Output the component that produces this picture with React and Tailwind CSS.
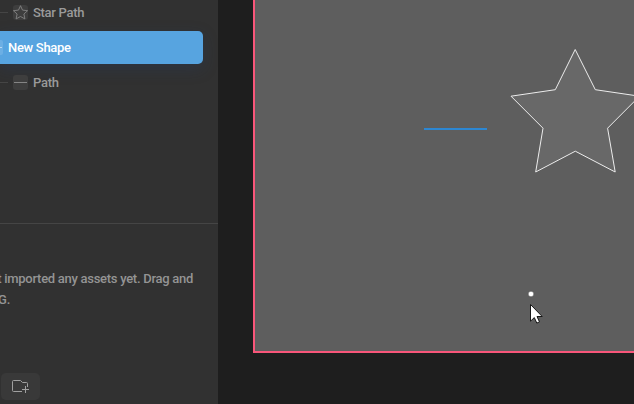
import React from "react";

function StarIcon() {
  return (
    <svg className="block h-[15px] w-[15px]" viewBox="0 0 15 15" fill="none" stroke="#858585" strokeWidth="0.9">
      <path d="M7.5 .7 9.5 5.1 14.6 5.7 10.9 9 11.9 13.9 7.5 11.5 3.1 13.9 4.1 9 .4 5.7 5.5 5.1Z" />
    </svg>
  );
}

function LayerRow({ label, children }) {
  return (
    <div className="flex h-[35px] items-center text-[#9a9a9a]">
      <span className="h-px w-2 bg-[#454545]" />
      <span className="ml-[5px] flex h-[15px] w-[15px] items-center justify-center rounded-[3px] bg-[#3e3e3e]">{children}</span>
      <span className="ml-[5px]">{label}</span>
    </div>
  );
}

function Sidebar() {
  return (
    <aside className="flex w-[218px] shrink-0 flex-col bg-[#313131]">
      <div className="flex h-[223px] shrink-0 flex-col">
        <div className="-mt-[5px] h-[35px]">
          <LayerRow label="Star Path"><StarIcon /></LayerRow>
        </div>
        <div className="mt-px flex h-[33px] w-[203px] items-center rounded-r-[5px] bg-[#57a4e0] text-white shadow-[0_5px_15px_rgba(35,65,110,0.25)]">
          <span className="flex h-[15px] w-[3px] items-center rounded-r-[2px] bg-[#6cafe4]">
            <span className="h-px w-[2px] bg-[#b5d8f3]" />
          </span>
          <span className="ml-[5px]">New Shape</span>
        </div>
        <div className="mt-px">
          <LayerRow label="Path"><span className="h-px w-[13px] bg-[#858585]" /></LayerRow>
        </div>
      </div>
      <div className="h-px shrink-0 bg-[#454545]" />
      <div className="mt-[44px] whitespace-nowrap leading-[21px] tracking-[-0.28px] text-[#949494]">
        <p className="flex w-[193px] justify-end">t imported any assets yet. Drag and</p>
        <p className="flex w-[10px] justify-end">G.</p>
      </div>
      <button className="ml-px mt-[63px] flex h-[27px] w-[39px] shrink-0 items-center rounded-[5px] bg-[#393939] pl-[10px]">
        <svg className="h-[15px] w-[18px]" viewBox="0 0 18 15" fill="none" stroke="#a0a0a0">
          <path d="M11 12.5H2.5Q1.5 12.5 1.5 11.5V2.5Q1.5 1.5 2.5 1.5H9.5L11.5 3.5H15.5Q16.5 3.5 16.5 4.5V8M14.5 7V14M11 10.5H18" />
        </svg>
      </button>
    </aside>
  );
}

function Canvas() {
  return (
    <main className="flex-1 overflow-hidden bg-[#1e1e1e] pl-[35px]">
      <div className="h-[353px] w-[400px] border-b-2 border-l-2 border-[#f9567a] bg-[#5e5e5e]">
        <svg className="block h-[351px] w-[379px]" viewBox="255 0 379 351">
          <path d="M424 129H487" stroke="#2d87d2" strokeWidth="2" />
          <path d="M575.2 49.5 595.3 89.7 639.5 96.2 607.6 128.2 615.2 172 575.3 151.2 535.7 172 543 128.2 511 96.2 555.3 89.7Z" fill="#686868" stroke="#ededed" />
          <circle cx="531" cy="294" r="2.8" fill="white" stroke="#444" strokeWidth="0.5" />
          <path d="M530.5 304.5V321.2L534.3 317.6 536.8 323.1 539.5 321.9 537 316.5H542.2Z" fill="white" stroke="#171717" strokeWidth="1" />
        </svg>
      </div>
    </main>
  );
}

export default function App() {
  return (
    <div className="flex h-[404px] w-[634px] overflow-hidden font-['Roboto',sans-serif] text-[13px] font-medium leading-[20px] tracking-[-0.3px]">
      <Sidebar />
      <Canvas />
    </div>
  );
}
